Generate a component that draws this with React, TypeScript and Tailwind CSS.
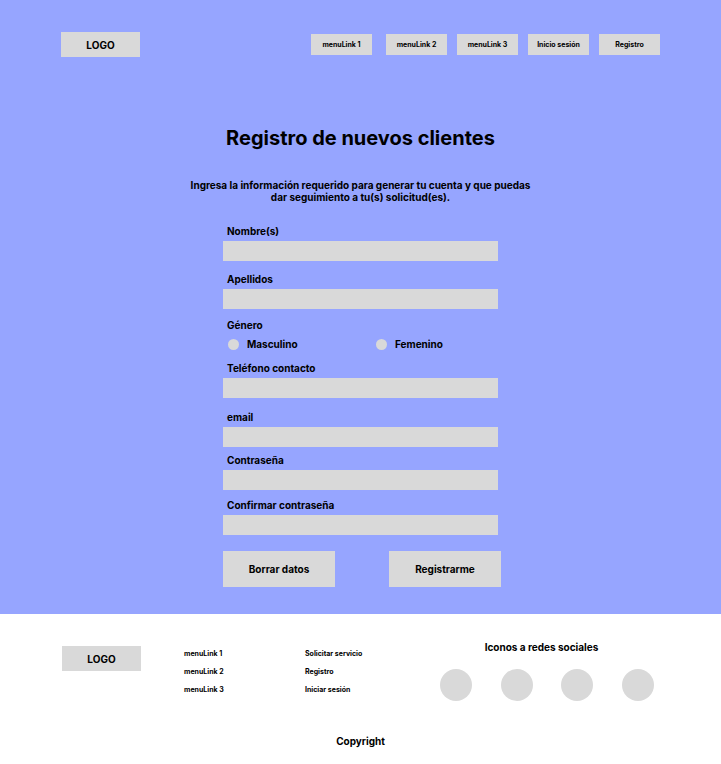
import type { ReactNode } from "react";

const headerLinks = ["menuLink 1", "menuLink 2", "menuLink 3", "Inicio sesión", "Registro"];
const footerMenu = ["menuLink 1", "menuLink 2", "menuLink 3"];
const footerServices = ["Solicitar servicio", "Registro", "Iniciar sesión"];
const socialNetworks = ["Red social 1", "Red social 2", "Red social 3", "Red social 4"];

function Logo() {
  return (
    <a href="#" className="flex h-[25px] w-[79px] shrink-0 items-center justify-center bg-[#d9d9d9]">
      LOGO
    </a>
  );
}

function Field({ id, label, type = "text", className = "" }: { id: string; label: string; type?: string; className?: string }) {
  return (
    <div className={`flex flex-col gap-1 ${className}`}>
      <label htmlFor={id} className="pl-1">
        {label}
      </label>
      <input id={id} name={id} type={type} className="h-5 w-full bg-[#d9d9d9] px-2 outline-none" />
    </div>
  );
}

function GenderOption({ value, children }: { value: string; children: ReactNode }) {
  return (
    <label className="flex w-[148px] items-center gap-2">
      <input
        type="radio"
        name="genero"
        value={value}
        className="size-[11px] appearance-none rounded-full bg-[#d9d9d9] checked:bg-black"
      />
      {children}
    </label>
  );
}

function FooterLinks({ links }: { links: string[] }) {
  return (
    <ul className="flex w-[121px] flex-col gap-2 text-[7px] leading-[10px]">
      {links.map((link) => (
        <li key={link}>
          <a href="#" className="block">{link}</a>
        </li>
      ))}
    </ul>
  );
}

export default function App() {
  return (
    <div className="flex min-h-screen flex-col bg-white font-['Inter',sans-serif] text-[10px] leading-3 font-bold text-black">
      <div className="bg-[#96a5ff] pb-[27px]">
        <header className="flex items-center justify-between px-[61px] pt-8">
          <Logo />
          <nav className="flex gap-[10px] text-[7px]">
            {headerLinks.map((link) => (
              <a key={link} href="#" className="flex h-[21px] w-[61px] items-center justify-center bg-[#d9d9d9] first:mr-1">
                {link}
              </a>
            ))}
          </nav>
        </header>

        <main>
          <h1 className="mt-[69px] text-center text-[20px] leading-6">Registro de nuevos clientes</h1>
          <p className="mx-auto mt-[29px] max-w-[350px] text-center">
            Ingresa la información requerido para generar tu cuenta y que puedas dar seguimiento a tu(s) solicitud(es).
          </p>

          <form className="mx-auto mt-[22px] w-[275px]" onSubmit={(event) => event.preventDefault()}>
            <Field id="nombre" label="Nombre(s)" />
            <Field id="apellidos" label="Apellidos" className="mt-3" />
            <fieldset className="mt-[10px]">
              <legend className="pl-1">Género</legend>
              <div className="mt-[7px] flex pl-[5px]">
                <GenderOption value="masculino">Masculino</GenderOption>
                <GenderOption value="femenino">Femenino</GenderOption>
              </div>
            </fieldset>
            <Field id="telefono" label="Teléfono contacto" type="tel" className="mt-3" />
            <Field id="email" label="email" type="email" className="mt-[13px]" />
            <Field id="contrasena" label="Contraseña" type="password" className="mt-[7px]" />
            <Field id="confirmar" label="Confirmar contraseña" type="password" className="mt-[9px]" />
            <div className="mt-4 -mr-[3px] flex justify-between">
              <button type="reset" className="h-9 w-28 bg-[#d9d9d9]">Borrar datos</button>
              <button type="submit" className="h-9 w-28 bg-[#d9d9d9]">Registrarme</button>
            </div>
          </form>
        </main>
      </div>

      <footer className="pb-[17px]">
        <div className="flex items-start pr-[67px] pl-[62px]">
          <div className="pt-8">
            <Logo />
          </div>
          <div className="ml-[43px] flex pt-[35px]">
            <FooterLinks links={footerMenu} />
            <FooterLinks links={footerServices} />
          </div>
          <section className="ml-auto w-[214px] pt-[27px]">
            <h2 className="pr-[11px] text-center">Iconos a redes sociales</h2>
            <div className="mt-4 flex justify-between">
              {socialNetworks.map((network) => (
                <a key={network} href="#" aria-label={network} className="size-8 rounded-full bg-[#d9d9d9]" />
              ))}
            </div>
          </section>
        </div>
        <p className="mt-[34px] text-center">Copyright</p>
      </footer>
    </div>
  );
}
